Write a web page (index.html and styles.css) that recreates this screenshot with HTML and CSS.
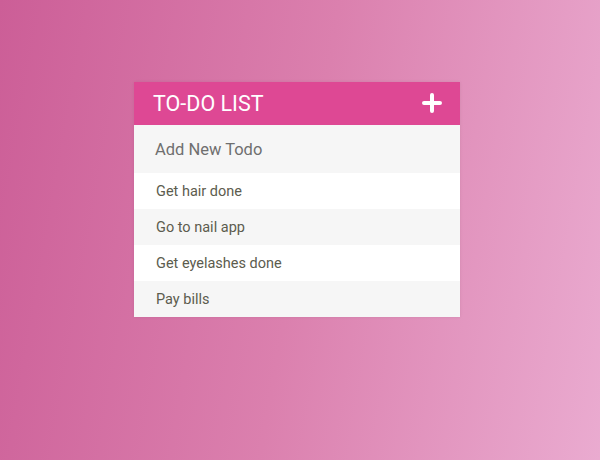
FILE: index.html
```html
<!DOCTYPE html>
<html>
<head>
<meta charset="utf-8">
<link rel="stylesheet" href="styles.css">
</head>
<body>
<div class="page">
  <div class="card">
    <div class="header">
      <span class="title">TO-DO LIST</span>
      <svg class="plus" width="20" height="20" viewBox="0 0 20 20"><path d="M10 2v16M2 10h16" stroke="#fff" stroke-width="4" stroke-linecap="round"/></svg>
    </div>
    <div class="add">Add New Todo</div>
    <ul class="list">
      <li class="item">Get hair done</li>
      <li class="item alt">Go to nail app</li>
      <li class="item">Get eyelashes done</li>
      <li class="item alt">Pay bills</li>
    </ul>
  </div>
</div>
</body>
</html>
```
FILE: styles.css
```css
html, body { margin: 0; padding: 0; }
body {
  width: 600px;
  height: 460px;
  background: linear-gradient(100deg, #cc5e97 0%, #db80ae 50%, #eaabd0 100%);
  font-family: Roboto, "Liberation Sans", sans-serif;
  overflow: hidden;
}
.page {
  padding: 82px 0 0 134px;
}
.card {
  width: 326px;
  box-shadow: 0 0 3px rgba(0,0,0,0.08);
}
.header {
  height: 43px;
  background: #de4894;
  display: flex;
  align-items: center;
  justify-content: space-between;
  padding: 0 18px 0 19px;
}
.title {
  color: #fff;
  font-size: 21.5px;
}
.plus { display: block; margin-top: -2px; }
.add {
  height: 48px;
  background: #f6f6f6;
  color: #6f6f6f;
  font-size: 16.5px;
  display: flex;
  align-items: center;
  padding-left: 21px;
}
.list { list-style: none; margin: 0; padding: 0; }
.item {
  height: 36px;
  background: #fff;
  color: #5c5c4e;
  font-size: 14.5px;
  display: flex;
  align-items: center;
  padding-left: 22px;
  padding-top: 1px;
  box-sizing: border-box;
}
.item.alt { background: #f6f6f6; }
```
